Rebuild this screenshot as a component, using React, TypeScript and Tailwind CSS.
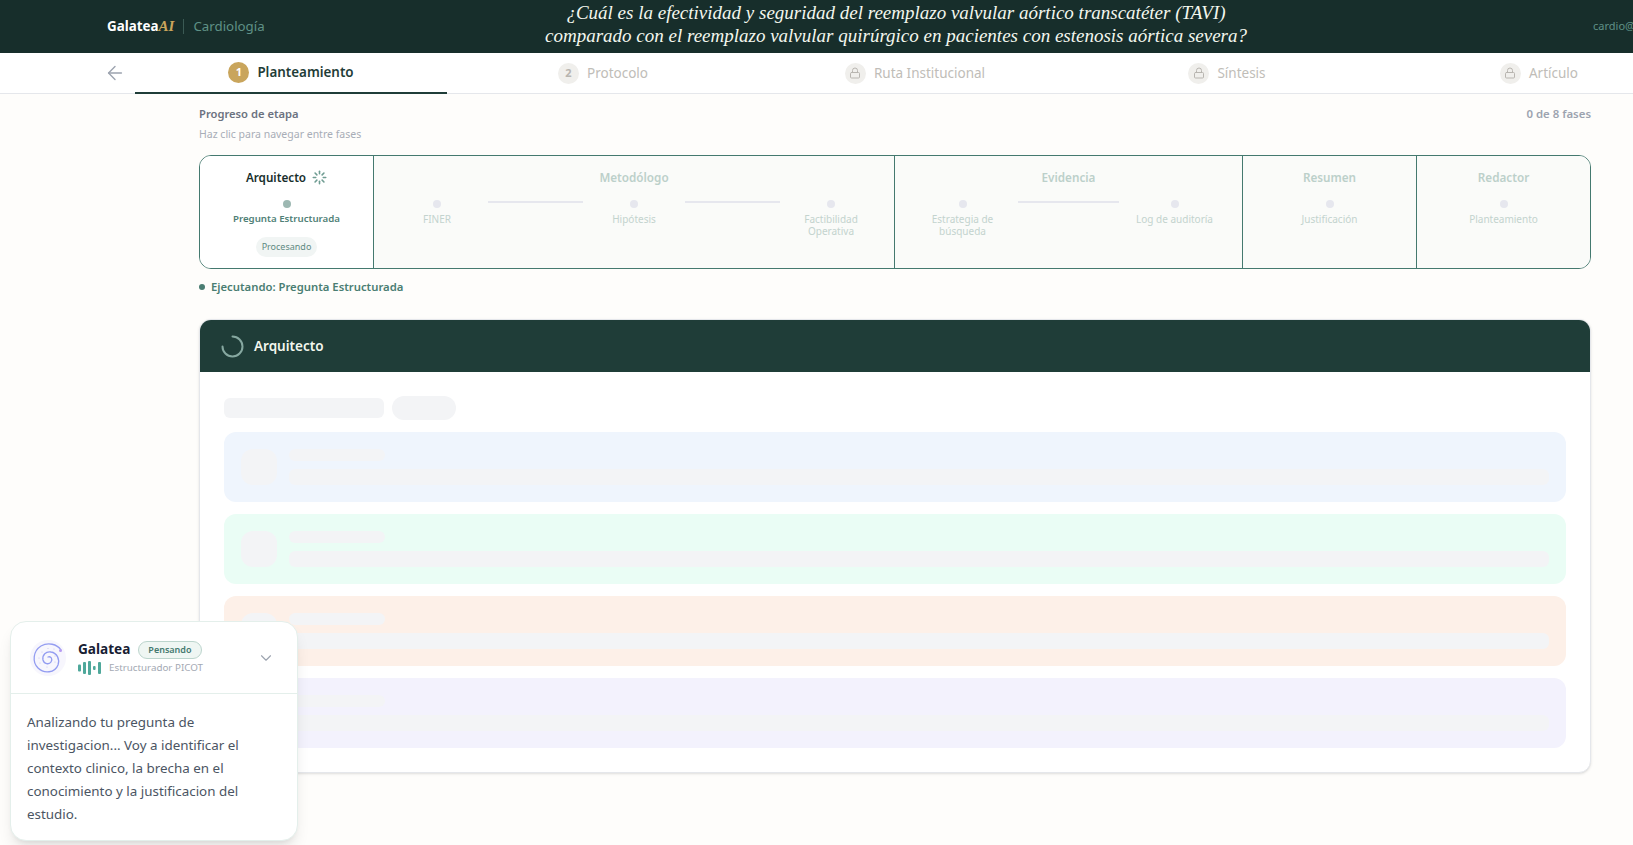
import { ArrowLeft, ChevronDown, Loader, Lock } from 'lucide-react';

const tabs = [
  { label: 'Protocolo', badge: '2' },
  { label: 'Ruta Institucional' },
  { label: 'Síntesis' },
  { label: 'Artículo' },
];

function PendingStep({ label, width }: { label: string; width: string }) {
  return (
    <div className={`${width} shrink-0 flex flex-col items-center`}>
      <span className="w-2 h-2 rounded-full bg-[#e6e7ee]" />
      <span className="mt-[5px] max-w-[90px] text-[10px] leading-[12px] text-center text-[#c3d3ce]">{label}</span>
    </div>
  );
}

function Line() {
  return <div className="flex-1 h-0.5 bg-[#e6e7ee] mt-px self-start" />;
}

function Group({ title, width, last, children }: { title: string; width: string; last?: boolean; children: React.ReactNode }) {
  return (
    <div className={`${width} shrink-0 bg-[#fafbf9] pt-[13px] ${last ? '' : 'border-r border-[#44796f]'}`}>
      <div className="text-center text-[11.7px] leading-[16px] font-semibold text-[#bcd0ca]">{title}</div>
      <div className="mt-[15px] px-3 flex items-start">{children}</div>
    </div>
  );
}

function SkeletonBox({ bg }: { bg: string }) {
  return (
    <div className={`${bg} rounded-xl h-[70px] p-[17px] flex gap-3`}>
      <div className="w-9 h-9 rounded-xl bg-[#f3f4f6] shrink-0" />
      <div className="flex-1 flex flex-col gap-2">
        <div className="w-24 h-3 rounded-md bg-[#f3f4f6]" />
        <div className="h-4 rounded-md bg-[#f3f4f6]" />
      </div>
    </div>
  );
}

// logo: ring that curls into a small centre spiral, with faint dots
function Spiral() {
  return (
    <svg width="36" height="36" viewBox="0 0 36 36" fill="none">
      <defs>
        <linearGradient id="spiral" x1="4" y1="32" x2="32" y2="4">
          <stop offset="0" stopColor="#6f9df0" />
          <stop offset="1" stopColor="#b79bf2" />
        </linearGradient>
      </defs>
      <circle cx="18" cy="18" r="18" fill="#f7f6fd" />
      <path
        d="M31 10 C27 4 18 2 11 6 C3 11 2 22 8 28 C14 34 25 33 28 25 C30 19 27 13 21 12 C16 11 12 15 13 20 C14 24 19 25 21 22 C23 19 21 16 18 17"
        stroke="url(#spiral)"
        strokeWidth="1.3"
        strokeLinecap="round"
      />
      <circle cx="30.5" cy="10.5" r="1.5" fill="#b79bf2" />
      <g fill="#c9c6f0">
        <circle cx="12" cy="12" r="0.6" />
        <circle cx="18" cy="8.5" r="0.6" />
        <circle cx="24" cy="9" r="0.6" />
        <circle cx="9" cy="18" r="0.6" />
        <circle cx="10" cy="23" r="0.6" />
        <circle cx="25" cy="16" r="0.6" />
        <circle cx="25" cy="22" r="0.6" />
        <circle cx="17" cy="27" r="0.6" />
      </g>
    </svg>
  );
}

export default function App() {
  return (
    <div className="w-[1633px] h-[845px] overflow-hidden relative bg-[#fefdfb] font-['Noto_Sans',sans-serif]">
      <header className="h-[53px] bg-[#172e2b] flex items-center pl-[107px] whitespace-nowrap">
        <div className="w-[170px] shrink-0 flex items-center">
          <span className="text-[13.4px] font-bold text-white">
            Galatea<span className="font-['Liberation_Serif',serif] italic text-[15px] text-[#c9a55c]">AI</span>
          </span>
          <span className="mx-[9px] w-px h-[15px] bg-[#3b5a54]" />
          <span className="text-[13.3px] text-[#5f9186]">Cardiología</span>
        </div>
        <h1 className="w-[1238px] shrink-0 pb-[5px] text-center font-['Liberation_Serif',serif] italic text-[19px] leading-[23px] text-[#f3f7ee]">
          ¿Cuál es la efectividad y seguridad del reemplazo valvular aórtico transcatéter (TAVI)
          <br />
          comparado con el reemplazo valvular quirúrgico en pacientes con estenosis aórtica severa?
        </h1>
        <span className="ml-[78px] text-[11px] text-[#5f9186] shrink-0">cardio@</span>
      </header>

      <nav className="h-[41px] bg-white border-b border-[#e5e7eb] flex items-stretch pl-[107px] whitespace-nowrap">
        <div className="w-7 shrink-0 flex items-center">
          <ArrowLeft size={22} strokeWidth={1.5} className="text-[#9ca3af] -ml-[3px]" />
        </div>
        <div className="w-[312px] shrink-0 -mb-px border-b-2 border-[#1f3d38] flex items-center justify-center gap-2">
          <span className="w-[21px] h-[21px] rounded-full bg-[#c9a55c] text-white text-[11px] font-bold flex items-center justify-center">1</span>
          <span className="text-[13.4px] font-semibold text-[#1f3d38]">Planteamiento</span>
        </div>
        {tabs.map((t) => (
          <div key={t.label} className="w-[312px] shrink-0 flex items-center justify-center gap-2">
            <span className="w-[21px] h-[21px] rounded-full bg-[#f0efec] text-[#b8b5b0] text-[11px] font-bold flex items-center justify-center">
              {t.badge ?? <Lock size={12} strokeWidth={2} />}
            </span>
            <span className="text-[13.5px] text-[#c0bdb8]">{t.label}</span>
          </div>
        ))}
      </nav>

      <main className="pl-[199px] w-[1591px] pt-[12px]">
        <div className="flex justify-between">
          <span className="text-[11.2px] leading-[16px] font-semibold text-[#6b7280]">Progreso de etapa</span>
          <span className="text-[11.4px] leading-[16px] font-semibold text-[#9ca3af]">0 de 8 fases</span>
        </div>
        <p className="mt-[4px] text-[10.5px] leading-[16px] text-[#a8adb7]">Haz clic para navegar entre fases</p>

        <div className="mt-[13px] h-[114px] flex rounded-xl border border-[#44796f] overflow-hidden">
          <div className="w-[174px] shrink-0 bg-white border-r border-[#44796f] pt-[13px] flex flex-col items-center">
            <div className="flex items-center gap-1.5 text-[11.7px] leading-[16px] font-semibold text-[#172e2b]">
              Arquitecto
              <Loader size={15} strokeWidth={2.5} className="text-[#6f9c92]" />
            </div>
            <span className="mt-[15px] w-2 h-2 rounded-full bg-[#9db8b2]" />
            <span className="mt-[5px] text-[9.7px] leading-[12px] font-semibold text-[#4f7f76]">Pregunta Estructurada</span>
            <span className="mt-[12px] px-[6px] h-5 flex items-center rounded-full bg-[#f1f5f4] text-[9px] text-[#5f8a82]">Procesando</span>
          </div>
          <Group title="Metodólogo" width="w-[521px]">
            <PendingStep label="FINER" width="w-[102px]" />
            <Line />
            <PendingStep label="Hipótesis" width="w-[102px]" />
            <Line />
            <PendingStep label="Factibilidad Operativa" width="w-[102px]" />
          </Group>
          <Group title="Evidencia" width="w-[348px]">
            <PendingStep label="Estrategia de búsqueda" width="w-[111px]" />
            <Line />
            <PendingStep label="Log de auditoría" width="w-[111px]" />
          </Group>
          <Group title="Resumen" width="w-[174px]">
            <PendingStep label="Justificación" width="w-full" />
          </Group>
          <Group title="Redactor" width="flex-1" last>
            <PendingStep label="Planteamiento" width="w-full" />
          </Group>
        </div>

        <div className="mt-[10px] flex items-center gap-[6px] text-[11.3px] leading-[16px] font-semibold text-[#4a7d72]">
          <span className="w-1.5 h-1.5 rounded-full bg-[#4a7d72]" />
          Ejecutando: Pregunta Estructurada
        </div>

        <section className="mt-[24px] rounded-xl border border-[#e5e7eb] bg-white shadow-sm overflow-hidden">
          <div className="h-[52px] bg-[#1f3d38] flex items-center gap-[10px] pl-[21px]">
            <svg width="23" height="23" viewBox="0 0 23 23" fill="none" stroke="#86a8a0" strokeWidth="2" strokeLinecap="round">
              <path d="M11.5 1.5 A10 10 0 1 1 1.5 11.5" />
            </svg>
            <span className="text-[13.5px] font-semibold text-[#f3f7ee]">Arquitecto</span>
          </div>
          <div className="p-6 flex flex-col gap-3">
            <div className="flex items-center gap-2">
              <div className="w-40 h-5 rounded-md bg-[#f3f4f6]" />
              <div className="w-16 h-6 rounded-full bg-[#f3f4f6]" />
            </div>
            <SkeletonBox bg="bg-[#eff5fd]" />
            <SkeletonBox bg="bg-[#eafdf5]" />
            <SkeletonBox bg="bg-[#fdf0e8]" />
            <SkeletonBox bg="bg-[#f3f2fd]" />
          </div>
        </section>
      </main>

      <aside className="absolute left-[10px] top-[621px] w-[288px] h-[220px] bg-white rounded-2xl border border-[#e4efeb] shadow-lg">
        <div className="h-[72px] border-b border-[#e4efeb] pl-[19px] pr-[22px] flex items-center">
          <Spiral />
          <div className="ml-[12px] flex-1">
            <div className="flex items-center gap-2">
              <span className="text-[13.6px] font-bold text-[#172033]">Galatea</span>
              <span className="h-[18px] px-[9px] flex items-center rounded-full border border-[#bcd5cd] bg-[#eff6f3] text-[9px] font-semibold text-[#44796f]">Pensando</span>
            </div>
            <div className="flex items-center gap-2 mt-[1px]">
              <svg width="23" height="14" viewBox="0 0 23 14" fill="#4fa89b">
                <rect x="0" y="3.5" width="3" height="7" rx="1" />
                <rect x="5" y="1" width="3" height="12" rx="1" />
                <rect x="10" y="0" width="3" height="14" rx="1" />
                <rect x="15" y="5" width="2.6" height="4" rx="1" />
                <rect x="20" y="1" width="3" height="12" rx="1" />
              </svg>
              <span className="text-[9.8px] text-[#a3a9b3]">Estructurador PICOT</span>
            </div>
          </div>
          <ChevronDown size={18} strokeWidth={1.5} className="text-[#9ca3af]" />
        </div>
        <p className="px-4 pt-[17px] text-[13.4px] leading-[23px] text-[#4b5563]">
          Analizando tu pregunta de investigacion... Voy a identificar el contexto clinico, la brecha en el conocimiento y la justificacion del estudio.
        </p>
      </aside>
    </div>
  );
}
